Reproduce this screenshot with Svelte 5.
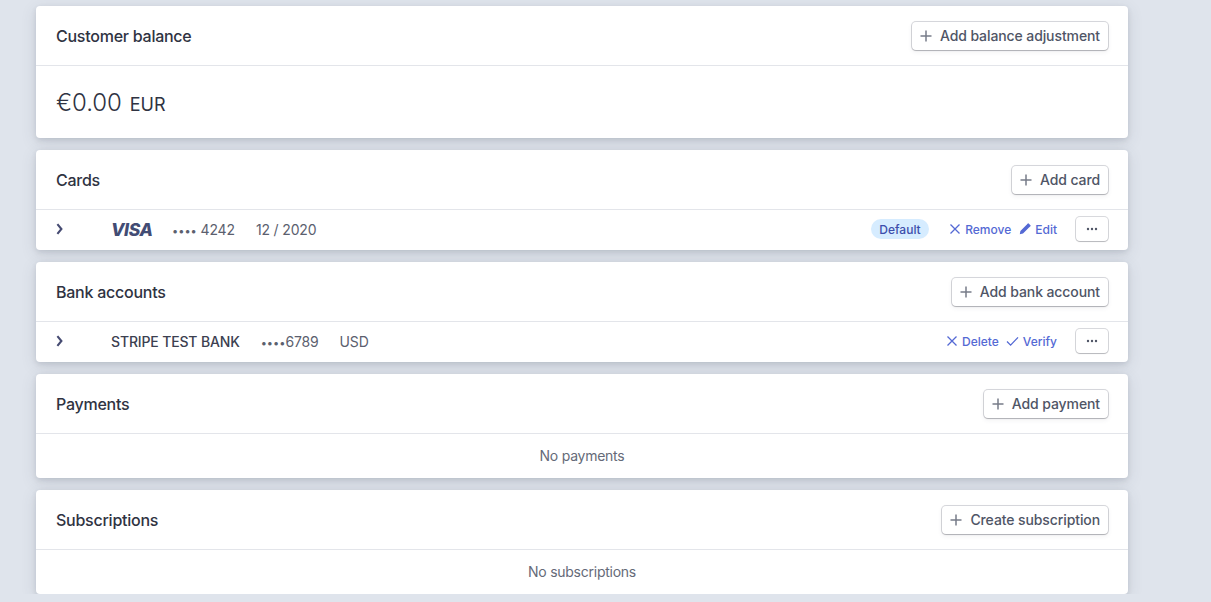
<script>
  const plus = 'M6 0.5v11M0.5 6h11';
</script>

{#snippet addButton(label)}
  <button class="btn">
    <svg class="plus" width="12" height="12" viewBox="0 0 12 12"><path d={plus} /></svg>
    <span>{label}</span>
  </button>
{/snippet}

{#snippet chevron()}
  <svg class="chev" width="8" height="12" viewBox="0 0 8 12"><path d="M1.4 1.2 5.4 6 1.4 10.8" /></svg>
{/snippet}

{#snippet more()}
  <button class="more" aria-label="More">
    <svg width="12" height="4" viewBox="0 0 12 4"><circle cx="2" cy="2" r="1.2" /><circle cx="6" cy="2" r="1.2" /><circle cx="10" cy="2" r="1.2" /></svg>
  </button>
{/snippet}

{#snippet cross()}
  <svg class="ic" width="12" height="12" viewBox="0 0 12 12"><path d="M1.5 1.5l9 9M10.5 1.5l-9 9" /></svg>
{/snippet}

<main class="page">
  <section class="card">
    <header class="head">
      <h2>Customer balance</h2>
      {@render addButton('Add balance adjustment')}
    </header>
    <div class="balance">
      <span class="amount">€0.00</span>
      <span class="currency">EUR</span>
    </div>
  </section>

  <section class="card">
    <header class="head">
      <h2>Cards</h2>
      {@render addButton('Add card')}
    </header>
    <div class="row">
      {@render chevron()}
      <span class="visa">VISA</span>
      <span class="muted last4"><span class="dots">••••</span> 4242</span>
      <span class="muted exp">12 / 2020</span>
      <span class="spacer"></span>
      <span class="badge">Default</span>
      <a class="action remove" href="#remove">{@render cross()}Remove</a>
      <a class="action edit" href="#edit">
        <svg class="pencil" width="12" height="12" viewBox="0 0 12 12"><path d="M0.8 11.2l.6-3.2L7.9 1.5l2.6 2.6L4 10.6zM8.8.6l.6-.3 2.3 2.3-.3.6-1 1-2.6-2.6z" /></svg>Edit
      </a>
      {@render more()}
    </div>
  </section>

  <section class="card">
    <header class="head">
      <h2>Bank accounts</h2>
      {@render addButton('Add bank account')}
    </header>
    <div class="row">
      {@render chevron()}
      <span class="bank">STRIPE TEST BANK</span>
      <span class="muted acct"><span class="dots">••••</span>6789</span>
      <span class="muted cur">USD</span>
      <span class="spacer"></span>
      <a class="action delete" href="#delete">{@render cross()}Delete</a>
      <a class="action verify" href="#verify">
        <svg class="ic" width="13" height="12" viewBox="0 0 13 12"><path d="M1 6.5l3.6 3.6L12 2.4" /></svg>Verify
      </a>
      {@render more()}
    </div>
  </section>

  <section class="card">
    <header class="head">
      <h2>Payments</h2>
      {@render addButton('Add payment')}
    </header>
    <div class="empty">No payments</div>
  </section>

  <section class="card">
    <header class="head">
      <h2>Subscriptions</h2>
      {@render addButton('Create subscription')}
    </header>
    <div class="empty">No subscriptions</div>
  </section>
</main>

<style>
  :global(body) {
    margin: 0;
    background: #dfe4ec;
    font-family: Inter, "Liberation Sans", sans-serif;
    overflow: hidden;
  }
  .page {
    display: flex;
    flex-direction: column;
    gap: 12px;
    width: 1092px;
    margin-left: 36px;
    padding-top: 6px;
  }
  .card {
    background: #fff;
    border-radius: 4px;
    box-shadow: 0 2px 5px rgba(60, 66, 87, 0.14), 0 4px 16px rgba(60, 66, 87, 0.13);
  }
  .head {
    display: flex;
    align-items: center;
    justify-content: space-between;
    box-sizing: border-box;
    height: 60px;
    padding: 0 20px;
    border-bottom: 1px solid #e3e5ea;
  }
  h2 {
    margin: 0;
    font-size: 16px;
    font-weight: 450;
    color: #2f3342;
    letter-spacing: -0.25px;
  }
  .btn {
    display: flex;
    align-items: center;
    gap: 8px;
    box-sizing: border-box;
    height: 28px;
    padding: 0 8px;
    background: #fff;
    border: 0;
    border-radius: 4px;
    box-shadow: 0 0 0 1px rgba(60, 66, 87, 0.2), 0 1px 1px rgba(0, 0, 0, 0.16), 0 2px 5px rgba(60, 66, 87, 0.08);
    font: 450 14px Inter, "Liberation Sans", sans-serif;
    letter-spacing: -0.1px;
    color: #4f5566;
  }
  .plus {
    stroke: #777c89;
    stroke-width: 1.5;
    fill: none;
  }
  .balance {
    display: flex;
    align-items: baseline;
    height: 72px;
    box-sizing: border-box;
    padding: 22px 20px 0;
    color: #2f3342;
  }
  .amount {
    font-size: 24px;
    line-height: 30px;
    font-weight: 300;
    letter-spacing: -0.1px;
  }
  .currency {
    font-size: 18px;
    font-weight: 400;
    margin-left: 8px;
  }
  .row {
    display: flex;
    align-items: center;
    box-sizing: border-box;
    height: 40px;
    padding: 0 20px 2px;
    font-size: 14px;
  }
  .chev {
    fill: none;
    stroke: #464b72;
    stroke-width: 2.1;
    margin-right: 47px;
  }
  .visa {
    width: 42px;
    font-size: 17.5px;
    font-weight: 800;
    font-style: italic;
    color: #424c74;
    letter-spacing: -0.4px;
  }
  .muted { color: #5b606e; letter-spacing: -0.15px; }
  .dots { font-size: 11px; letter-spacing: 0; }
  .last4 { margin-left: 19px; }
  .exp { margin-left: 21px; }
  .bank {
    font-size: 14px;
    font-weight: 450;
    color: #3c4050;
    letter-spacing: -0.15px;
  }
  .acct { margin-left: 21px; }
  .cur { margin-left: 21px; }
  .spacer { flex: 1; }
  .badge {
    display: flex;
    align-items: center;
    height: 20px;
    padding: 0 8.5px;
    border-radius: 10px;
    background: #d6ecff;
    color: #3d4eac;
    font-size: 12px;
    font-weight: 500;
  }
  .action {
    display: flex;
    align-items: center;
    gap: 4px;
    font-size: 12px;
    font-weight: 500;
    color: #5469d4;
    text-decoration: none;
  }
  .remove { margin-left: 20px; }
  .edit { margin-left: 8px; }
  .delete { margin-left: 0; }
  .verify { margin-left: 7px; }
  .ic {
    fill: none;
    stroke: #5469d4;
    stroke-width: 1.3;
  }
  .pencil { fill: #5469d4; }
  .more {
    display: flex;
    align-items: center;
    justify-content: center;
    width: 32px;
    height: 24px;
    margin-left: 19px;
    padding: 0;
    background: #fff;
    border: 0;
    border-radius: 4px;
    box-shadow: 0 0 0 1px rgba(60, 66, 87, 0.2), 0 1px 1px rgba(0, 0, 0, 0.16);
  }
  .more svg { fill: #4f5566; }
  .empty {
    display: flex;
    align-items: center;
    justify-content: center;
    box-sizing: border-box;
    height: 44px;
    padding-bottom: 2px;
    font-size: 14px;
    letter-spacing: -0.25px;
    color: #656a78;
  }
</style>
